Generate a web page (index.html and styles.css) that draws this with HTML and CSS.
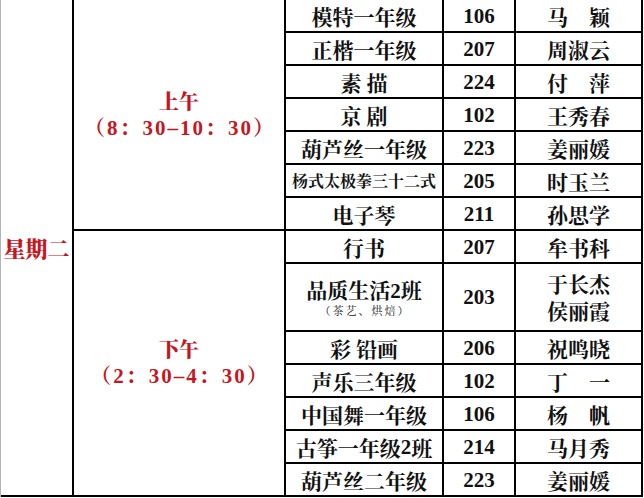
FILE: index.html
```html
<!DOCTYPE html>
<html lang="zh-CN">
<head>
<meta charset="utf-8">
<title>课程表 星期二</title>
<link rel="stylesheet" href="styles.css">
</head>
<body>
<div class="schedule">
  <div class="day"><span>星期二</span></div>
  <div class="period am"><div class="p-name">上午</div><div class="p-time">（8：30–10：30）</div></div>
  <div class="period pm"><div class="p-name">下午</div><div class="p-time">（2：30–4：30）</div></div>

  <div class="cell course">模特一年级</div><div class="cell room">106</div><div class="cell teacher">马　颖</div>
  <div class="cell course">正楷一年级</div><div class="cell room">207</div><div class="cell teacher">周淑云</div>
  <div class="cell course">素 描</div><div class="cell room">224</div><div class="cell teacher">付　萍</div>
  <div class="cell course">京 剧</div><div class="cell room">102</div><div class="cell teacher">王秀春</div>
  <div class="cell course">葫芦丝一年级</div><div class="cell room">223</div><div class="cell teacher">姜丽媛</div>
  <div class="cell course small">杨式太极拳三十二式</div><div class="cell room">205</div><div class="cell teacher">时玉兰</div>
  <div class="cell course">电子琴</div><div class="cell room">211</div><div class="cell teacher">孙思学</div>

  <div class="cell course">行书</div><div class="cell room">207</div><div class="cell teacher">牟书科</div>
  <div class="cell course stack"><div class="main">品质生活<span class="num">2</span>班</div><div class="note">（茶艺、烘焙）</div></div><div class="cell room">203</div><div class="cell teacher two"><div class="line">于长杰</div><div class="line">侯丽霞</div></div>
  <div class="cell course">彩 铅画</div><div class="cell room">206</div><div class="cell teacher">祝鸣晓</div>
  <div class="cell course">声乐三年级</div><div class="cell room">102</div><div class="cell teacher">丁　一</div>
  <div class="cell course">中国舞一年级</div><div class="cell room">106</div><div class="cell teacher">杨　帆</div>
  <div class="cell course">古筝一年级<span class="num">2</span>班</div><div class="cell room">214</div><div class="cell teacher">马月秀</div>
  <div class="cell course">葫芦丝二年级</div><div class="cell room">223</div><div class="cell teacher">姜丽媛</div>
</div>
</body>
</html>
```

FILE: styles.css
```css
html, body {
  margin: 0;
  padding: 0;
  background: #fff;
}

body {
  font-family: "Noto Serif CJK SC", "Noto Sans CJK SC", serif;
  color: #111;
}

.schedule {
  display: grid;
  width: max-content;
  grid-template-columns: 71px 210px 156px 70px 125px;
  grid-template-rows: repeat(8, 31px) 66px repeat(5, 31px);
  gap: 2px;
  background: #000;
  border-left: 1px solid #b4b4b4;
  padding: 2px 2px 2px 0;
  margin-top: -2px;
}

.schedule > div {
  background: #fff;
  display: flex;
  align-items: center;
  justify-content: center;
  text-align: center;
}

.day {
  grid-column: 1;
  grid-row: 1 / 15;
  color: #c8161e;
  font-weight: 900;
  font-size: 22px;
}

.period {
  grid-column: 2;
  flex-direction: column;
  color: #c8161e;
  font-family: "Liberation Serif", "Noto Serif CJK SC", "Noto Sans CJK SC", serif;
  font-weight: 700;
}

.am { grid-row: 1 / 8; }
.pm { grid-row: 8 / 15; }

.p-name {
  font-size: 20px;
  line-height: 26px;
  font-weight: 900;
}

.p-time {
  font-size: 21px;
  line-height: 26px;
  letter-spacing: 2px;
  margin-left: 2px;
}

.cell {
  font-size: 21px;
  font-weight: 700;
  line-height: 26px;
  white-space: nowrap;
}

.course.small {
  font-size: 16px;
}

.num {
  font-family: "Liberation Serif", serif;
  font-weight: 700;
}

.room {
  font-family: "Liberation Serif", serif;
  font-weight: 700;
}

.stack {
  flex-direction: column;
}

.stack .main {
  line-height: 24px;
}

.stack .note {
  font-size: 11px;
  line-height: 15px;
  font-weight: 400;
  letter-spacing: 2px;
  margin-left: 2px;
}

.teacher.two {
  flex-direction: column;
}

.teacher.two .line {
  line-height: 27px;
}
```
